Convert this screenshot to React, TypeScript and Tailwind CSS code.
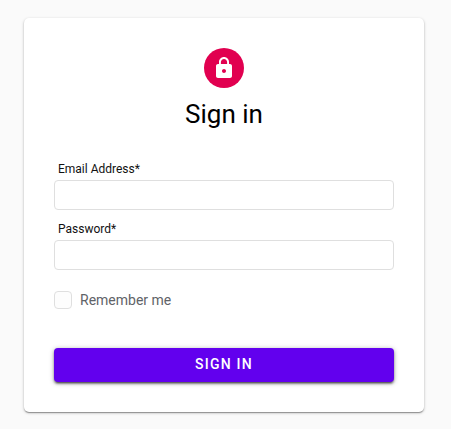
type FieldProps = {
  id: string;
  label: string;
  type: string;
};

function Field({ id, label, type }: FieldProps) {
  return (
    <div className="flex flex-col">
      <label htmlFor={id} className="h-5 pl-1 pt-px text-xs leading-4 text-[#111111]">
        {label}
      </label>
      <input
        id={id}
        type={type}
        className="h-[30px] w-full rounded border border-[#dfdfdf] bg-white px-2 text-sm outline-none"
      />
    </div>
  );
}

export default function App() {
  return (
    <div className="h-[429px] bg-[#fafafa] pl-6 pt-[18px] font-['Roboto',sans-serif]">
      <form className="flex h-[394px] w-[400px] flex-col rounded-[5px] bg-white px-[30px] pt-[30px] shadow-[0_1px_3px_0_rgba(0,0,0,0.25),0_1px_1px_0_rgba(0,0,0,0.18),0_2px_1px_-1px_rgba(0,0,0,0.15)]">
        <div className="flex flex-col items-center">
          <div className="flex h-10 w-10 items-center justify-center rounded-full bg-[#e10050] text-white">
            <svg viewBox="0 0 24 24" className="h-6 w-6" fill="currentColor">
              <path d="M18 8h-1V6c0-2.76-2.24-5-5-5S7 3.24 7 6v2H6c-1.1 0-2 .9-2 2v10c0 1.1.9 2 2 2h12c1.1 0 2-.9 2-2V10c0-1.1-.9-2-2-2zm-6 9c-1.1 0-2-.9-2-2s.9-2 2-2 2 .9 2 2-.9 2-2 2zm3.1-9H8.9V6c0-1.71 1.39-3.1 3.1-3.1 1.71 0 3.1 1.39 3.1 3.1v2z" />
            </svg>
          </div>
          <h1 className="mt-2.5 text-[26px] leading-8 text-black">Sign in</h1>
        </div>

        <div className="mt-[30px] flex flex-col gap-2.5">
          <Field id="email" label="Email Address*" type="email" />
          <Field id="password" label="Password*" type="password" />
        </div>

        <label className="mt-[21px] flex items-center gap-2 text-sm leading-[18px] text-[#5f6368]">
          <input
            type="checkbox"
            className="h-[18px] w-[18px] appearance-none rounded border border-[#dfdfdf] bg-[#fdfdfd]"
          />
          Remember me
        </label>

        <button
          type="button"
          className="mt-[39px] h-[34px] w-full rounded bg-[#6200ee] pb-0.5 text-sm font-medium tracking-[1.25px] text-white shadow-[0_3px_1px_-2px_rgba(0,0,0,0.3),0_2px_2px_0_rgba(0,0,0,0.35),0_1px_5px_0_rgba(0,0,0,0.35)]"
        >
          SIGN IN
        </button>
      </form>
    </div>
  );
}
